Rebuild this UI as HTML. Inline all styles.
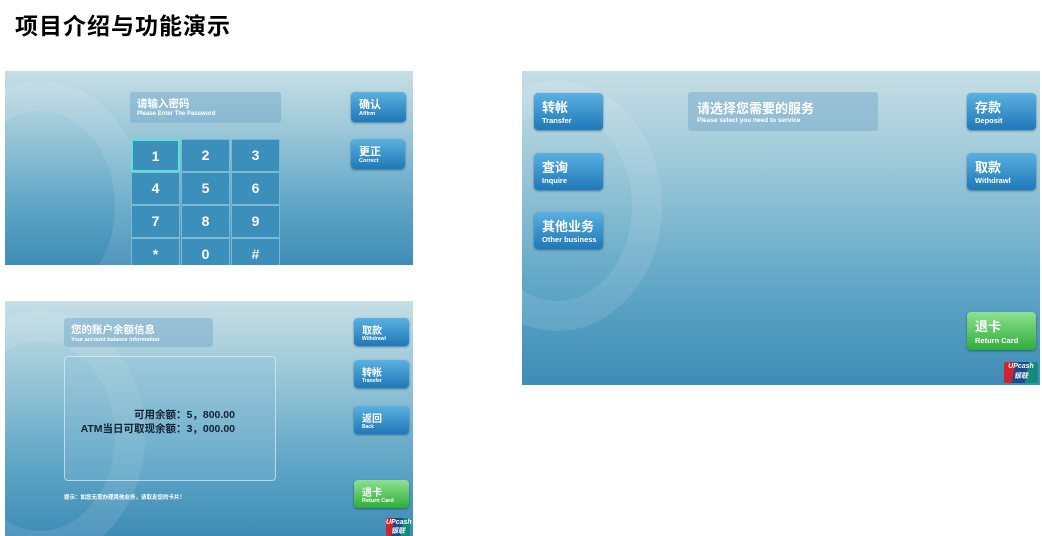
<!DOCTYPE html>
<html><head><meta charset="utf-8"><style>
body{margin:0;width:1042px;height:536px;background:#fff;position:relative;overflow:hidden;font-family:"Liberation Sans","Noto Sans CJK SC",sans-serif}
.a{position:absolute}
.scr{position:absolute;overflow:hidden;background:linear-gradient(180deg,#c7dee5 0%,#9cc8d9 30%,#5ea5c6 70%,#3f8cb6 100%)}
.scr:before{content:"";position:absolute;left:-70px;top:10px;width:150px;height:190px;border:30px solid rgba(255,255,255,.1);border-radius:50%;border-left-color:transparent}
.btn{position:absolute;border-radius:4px;background:linear-gradient(180deg,#5ab0e0,#1f78b8);box-shadow:0 1px 2px rgba(0,40,80,.5);color:#fff}
.btn b{position:absolute;left:8px;top:4px;font-size:13px;font-weight:bold}
.btn i{position:absolute;left:8px;font-style:normal;font-size:7.5px;font-weight:bold}
.g{background:linear-gradient(180deg,#8fe08f,#2fae3a)}
.hd{position:absolute;background:rgba(110,165,200,.45);border-radius:3px;color:#fff;font-weight:bold}
.key{position:absolute;background:#3d8fbb;color:#fff;font-size:14px;font-weight:bold;text-align:center;border:1px solid #7bbad6;box-sizing:border-box}
.logo{position:absolute;background:linear-gradient(100deg,#d2232a 0 30%,#1a4c8c 30% 65%,#138a7a 65%);color:#fff;font-size:7px;font-style:italic;font-weight:bold;border-radius:2px;text-align:center}
</style></head><body>
<div class="a" style="left:15px;top:7px;font-size:23px;font-weight:bold;color:#000;letter-spacing:1px">项目介绍与功能演示</div>

<div class="scr" style="left:5px;top:71px;width:408px;height:194px">
 <div class="hd" style="left:125px;top:21px;width:151px;height:31px"><div class="a" style="left:7px;top:4px;font-size:10.5px">请输入密码</div><div class="a" style="left:7px;top:19px;font-size:6px">Please Enter The Password</div></div>
 <div class="key" style="left:126px;top:68px;width:49px;height:33px;line-height:31px;border:2px solid #5fe0d8">1</div>
 <div class="key" style="left:176px;top:68px;width:49px;height:33px;line-height:31px">2</div>
 <div class="key" style="left:226px;top:68px;width:49px;height:33px;line-height:31px">3</div>
 <div class="key" style="left:126px;top:101px;width:49px;height:33px;line-height:31px">4</div>
 <div class="key" style="left:176px;top:101px;width:49px;height:33px;line-height:31px">5</div>
 <div class="key" style="left:226px;top:101px;width:49px;height:33px;line-height:31px">6</div>
 <div class="key" style="left:126px;top:134px;width:49px;height:33px;line-height:31px">7</div>
 <div class="key" style="left:176px;top:134px;width:49px;height:33px;line-height:31px">8</div>
 <div class="key" style="left:226px;top:134px;width:49px;height:33px;line-height:31px">9</div>
 <div class="key" style="left:126px;top:167px;width:49px;height:33px;line-height:31px">*</div>
 <div class="key" style="left:176px;top:167px;width:49px;height:33px;line-height:31px">0</div>
 <div class="key" style="left:226px;top:167px;width:49px;height:33px;line-height:31px">#</div>
 <div class="btn" style="left:346px;top:21px;width:55px;height:30px"><b style="font-size:11px">确认</b><i style="top:19px;font-size:5.5px">Affirm</i></div>
 <div class="btn" style="left:346px;top:68px;width:54px;height:30px"><b style="font-size:11px">更正</b><i style="top:19px;font-size:5.5px">Correct</i></div>
</div>

<div class="scr" style="left:5px;top:301px;width:408px;height:235px">
 <div class="hd" style="left:59px;top:17px;width:149px;height:29px"><div class="a" style="left:7px;top:4px;font-size:10.5px">您的账户余额信息</div><div class="a" style="left:7px;top:19px;font-size:5.5px">Your account balance information</div></div>
 <div class="a" style="left:59px;top:55px;width:210px;height:123px;border:1px solid rgba(220,240,250,.7);border-radius:4px;background:rgba(140,190,215,.25)"></div>
 <div class="a" style="left:60px;top:107px;width:170px;text-align:right;font-size:10.5px;font-weight:bold;color:#123;line-height:14px">可用余额：5，800.00<br>ATM当日可取现余额：3，000.00</div>
 <div class="a" style="left:59px;top:192px;font-size:5.5px;font-weight:bold;color:#fff">提示：如您无需办理其他业务，请取走您的卡片！</div>
 <div class="btn" style="left:349px;top:17px;width:55px;height:28px"><b style="font-size:10px">取款</b><i style="top:18px;font-size:5px">Withdrawl</i></div>
 <div class="btn" style="left:349px;top:59px;width:55px;height:28px"><b style="font-size:10px">转帐</b><i style="top:18px;font-size:5px">Transfer</i></div>
 <div class="btn" style="left:349px;top:105px;width:55px;height:28px"><b style="font-size:10px">返回</b><i style="top:18px;font-size:5px">Back</i></div>
 <div class="btn g" style="left:349px;top:179px;width:55px;height:28px"><b style="font-size:10px">退卡</b><i style="top:18px;font-size:5.5px">Return Card</i></div>
 <div class="logo" style="left:381px;top:217px;width:24px;height:18px;line-height:9px">UPcash<br>银联</div>
</div>

<div class="scr" style="left:522px;top:71px;width:518px;height:314px">
 <div class="hd" style="left:166px;top:21px;width:190px;height:39px"><div class="a" style="left:9px;top:6px;font-size:13px">请选择您需要的服务</div><div class="a" style="left:9px;top:25px;font-size:6.5px">Please select you need to service</div></div>
 <div class="btn" style="left:12px;top:22px;width:69px;height:37px"><b>转帐</b><i style="top:23px">Transfer</i></div>
 <div class="btn" style="left:12px;top:82px;width:69px;height:37px"><b>查询</b><i style="top:23px">Inquire</i></div>
 <div class="btn" style="left:12px;top:141px;width:69px;height:37px"><b>其他业务</b><i style="top:23px">Other business</i></div>
 <div class="btn" style="left:445px;top:22px;width:69px;height:37px"><b>存款</b><i style="top:23px">Deposit</i></div>
 <div class="btn" style="left:445px;top:82px;width:69px;height:37px"><b>取款</b><i style="top:23px">Withdrawl</i></div>
 <div class="btn g" style="left:445px;top:241px;width:69px;height:38px"><b>退卡</b><i style="top:24px">Return Card</i></div>
 <div class="logo" style="left:482px;top:291px;width:34px;height:21px;line-height:10px">UPcash<br>银联</div>
</div>
</body></html>
